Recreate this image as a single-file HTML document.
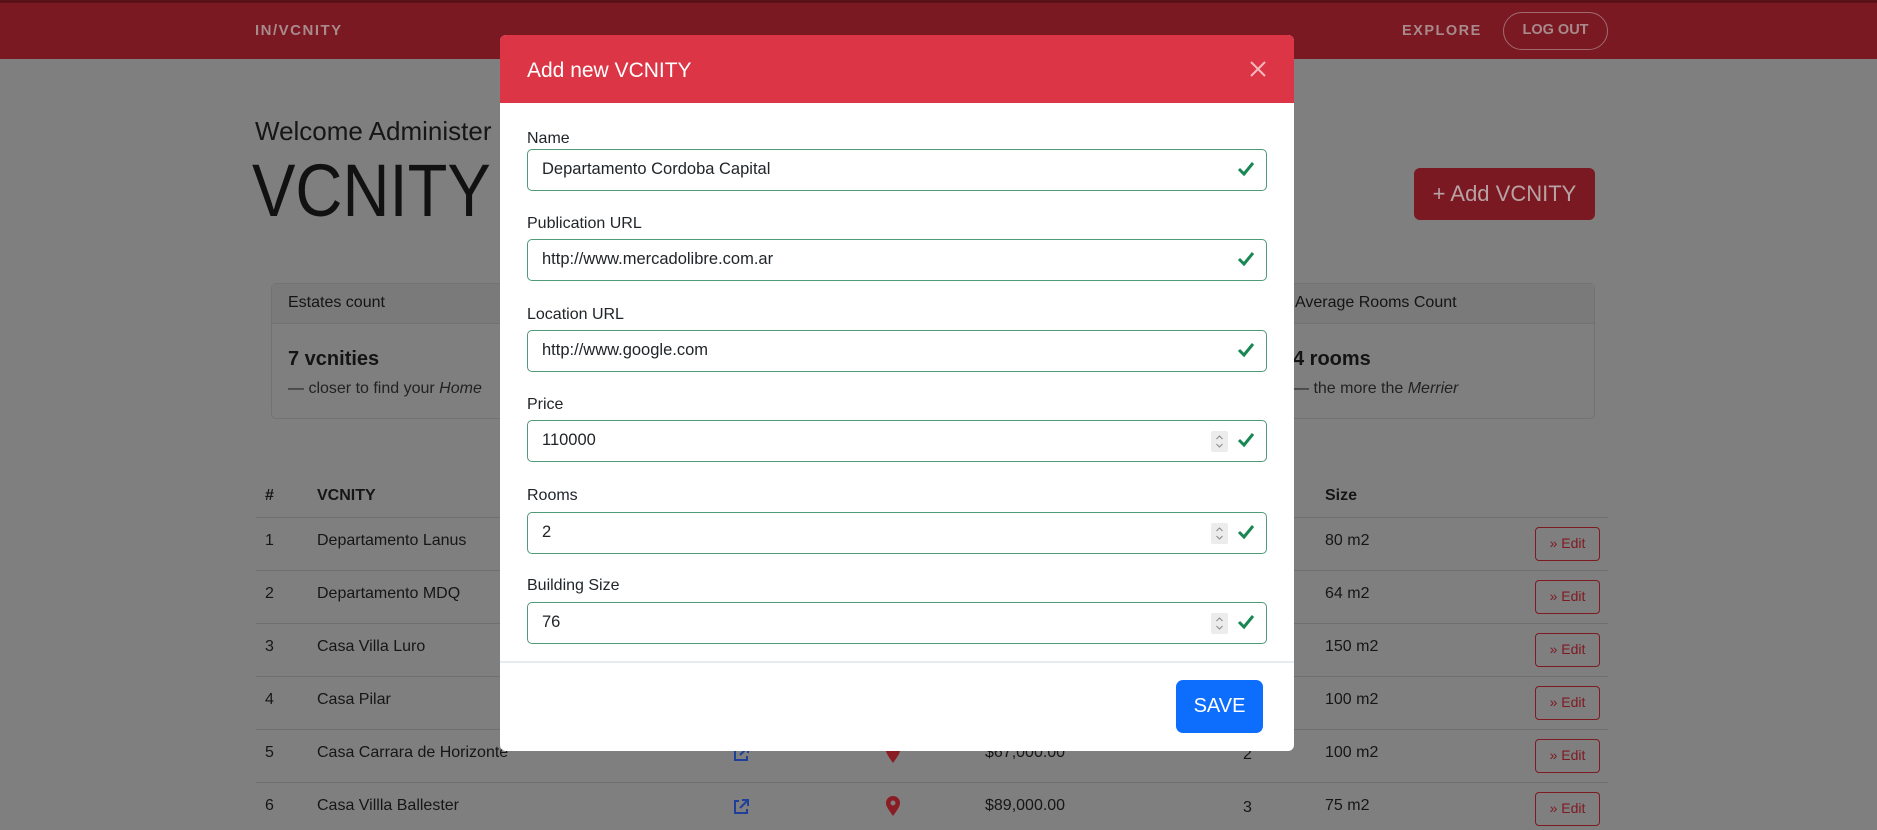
<!DOCTYPE html>
<html><head><meta charset="utf-8"><style>
*{box-sizing:border-box;margin:0;padding:0}
body{width:1877px;height:830px;overflow:hidden;background:#7f7f7f;font-family:"Liberation Sans",Arial,sans-serif;color:#141414;position:relative}
.a{position:absolute;white-space:nowrap}
.nav{left:0;top:0;width:1877px;height:59px;background:#7a1921;border-top:3px solid #5a1218}
.navt{color:#a88a8d;font-weight:bold;font-size:15px;letter-spacing:1.5px}
.card{border:1px solid #727272;border-radius:5px;background:#7f7f7f}
.ch{background:#7a7a7a;border-bottom:1px solid #727272}
.line{height:1px;background:#6f6f6f;left:256px;width:1352px}
.td{font-size:16px;color:#161616}
.edit{width:65px;height:34px;border:1.5px solid #7d1a22;border-radius:4px;color:#7d1a22;font-size:14px;text-align:center;line-height:31px}
.modal{left:500px;top:35px;width:794px;height:716px;background:#fff;border-radius:6px;overflow:hidden}
.mh{left:0;top:0;width:794px;height:68px;background:#dc3545}
.lbl{font-size:16px;color:#212529;left:27px}
.inp{left:27px;width:740px;height:42px;border:1.5px solid #4f9a78;border-radius:5px;font-size:16.5px;color:#212529;padding-left:14px;line-height:39px}
.chk{position:absolute;right:10px;top:9px}
.spin{position:absolute;right:38px;top:10px;width:17px;height:21px;background:#ececec;border-radius:2px}
</style></head><body>
<div class="a nav"></div>
<div class="a navt" style="left:255px;top:22px">IN/VCNITY</div>
<div class="a navt" style="left:1402px;top:23px;font-size:14.5px">EXPLORE</div>
<div class="a" style="left:1503px;top:12px;width:105px;height:38px;border:1.5px solid #a06a70;border-radius:19px;color:#a88a8d;font-weight:bold;font-size:14.5px;text-align:center;line-height:35px">LOG OUT</div>

<div class="a" style="left:255px;top:116px;font-size:26px;color:#161616">Welcome Administer</div>
<div class="a" style="left:252px;top:148px;font-size:74px;color:#111;transform:scaleX(0.88);transform-origin:0 0">VCNITY</div>
<div class="a" style="left:1414px;top:168px;width:181px;height:52px;background:#7a1921;border-radius:6px;color:#b8a2a4;font-size:22px;text-align:center;line-height:52px">+ Add VCNITY</div>

<div class="a card" style="left:271px;top:283px;width:320px;height:136px"><div class="ch" style="height:40px"></div></div>
<div class="a" style="left:288px;top:294px;font-size:16px">Estates count</div>
<div class="a" style="left:288px;top:348px;font-size:20px;font-weight:bold">7 vcnities</div>
<div class="a" style="left:288px;top:380px;font-size:16px;color:#222">— closer to find your <i>Home</i></div>
<div class="a card" style="left:1270px;top:283px;width:325px;height:136px"><div class="ch" style="height:40px"></div></div>
<div class="a" style="left:1295px;top:294px;font-size:16px">Average Rooms Count</div>
<div class="a" style="left:1293px;top:348px;font-size:20px;font-weight:bold">4 rooms</div>
<div class="a" style="left:1293px;top:380px;font-size:16px;color:#222">— the more the <i>Merrier</i></div>

<div class="a td" style="left:265px;top:487px;font-weight:bold">#</div>
<div class="a td" style="left:317px;top:487px;font-weight:bold">VCNITY</div>
<div class="a td" style="left:1325px;top:487px;font-weight:bold">Size</div>
<div class="a line" style="top:517px"></div>
<div class="a line" style="top:570px"></div>
<div class="a line" style="top:623px"></div>
<div class="a line" style="top:676px"></div>
<div class="a line" style="top:729px"></div>
<div class="a line" style="top:782px"></div>

<div class="a td" style="left:265px;top:532px">1</div><div class="a td" style="left:317px;top:532px">Departamento Lanus</div><div class="a td" style="left:1325px;top:532px">80 m2</div><div class="a edit" style="left:1535px;top:527px">» Edit</div>
<div class="a td" style="left:265px;top:585px">2</div><div class="a td" style="left:317px;top:585px">Departamento MDQ</div><div class="a td" style="left:1325px;top:585px">64 m2</div><div class="a edit" style="left:1535px;top:580px">» Edit</div>
<div class="a td" style="left:265px;top:638px">3</div><div class="a td" style="left:317px;top:638px">Casa Villa Luro</div><div class="a td" style="left:1325px;top:638px">150 m2</div><div class="a edit" style="left:1535px;top:633px">» Edit</div>
<div class="a td" style="left:265px;top:691px">4</div><div class="a td" style="left:317px;top:691px">Casa Pilar</div><div class="a td" style="left:1325px;top:691px">100 m2</div><div class="a edit" style="left:1535px;top:686px">» Edit</div>
<div class="a td" style="left:265px;top:744px">5</div><div class="a td" style="left:317px;top:744px">Casa Carrara de Horizonte</div><div class="a td" style="left:985px;top:744px">$67,000.00</div><div class="a td" style="left:1243px;top:746px">2</div><div class="a td" style="left:1325px;top:744px">100 m2</div><div class="a edit" style="left:1535px;top:739px">» Edit</div>
<div class="a td" style="left:265px;top:797px">6</div><div class="a td" style="left:317px;top:797px">Casa Villla Ballester</div><div class="a td" style="left:985px;top:797px">$89,000.00</div><div class="a td" style="left:1243px;top:799px">3</div><div class="a td" style="left:1325px;top:797px">75 m2</div><div class="a edit" style="left:1535px;top:792px">» Edit</div>
<svg class="a" style="left:731px;top:744px" width="20" height="20" viewBox="0 0 20 20"><path d="M8 4H4v12h12v-4M11 3h6v6M17 3l-8 8" fill="none" stroke="#1f3f9a" stroke-width="2"/></svg>
<svg class="a" style="left:731px;top:797px" width="20" height="20" viewBox="0 0 20 20"><path d="M8 4H4v12h12v-4M11 3h6v6M17 3l-8 8" fill="none" stroke="#1f3f9a" stroke-width="2"/></svg>
<svg class="a" style="left:885px;top:795px" width="16" height="22" viewBox="0 0 16 22"><path d="M8 21C3 14 1 11 1 8a7 7 0 0114 0c0 3-2 6-7 13z" fill="#8a1c24"/><circle cx="8" cy="8" r="2.5" fill="#7f7f7f"/></svg>
<svg class="a" style="left:885px;top:742px" width="16" height="22" viewBox="0 0 16 22"><path d="M8 21C3 14 1 11 1 8a7 7 0 0114 0c0 3-2 6-7 13z" fill="#8a1c24"/></svg>

<div class="a modal">
 <div class="a mh"></div>
 <div class="a" style="left:27px;top:24px;font-size:21px;color:#fff">Add new VCNITY</div>
 <svg class="a" style="left:749px;top:25px" width="18" height="18" viewBox="0 0 18 18"><path d="M2 2L16 16M16 2L2 16" stroke="#f4b9bf" stroke-width="2"/></svg>

 <div class="a lbl" style="top:95px">Name</div>
 <div class="a inp" style="top:114px">Departamento Cordoba Capital<svg class="chk" width="20" height="20" viewBox="0 0 20 20"><path d="M3 10l5 5L17 4" fill="none" stroke="#198754" stroke-width="3"/></svg></div>
 <div class="a lbl" style="top:180px">Publication URL</div>
 <div class="a inp" style="top:204px">http://www.mercadolibre.com.ar<svg class="chk" width="20" height="20" viewBox="0 0 20 20"><path d="M3 10l5 5L17 4" fill="none" stroke="#198754" stroke-width="3"/></svg></div>
 <div class="a lbl" style="top:271px">Location URL</div>
 <div class="a inp" style="top:295px">http://www.google.com<svg class="chk" width="20" height="20" viewBox="0 0 20 20"><path d="M3 10l5 5L17 4" fill="none" stroke="#198754" stroke-width="3"/></svg></div>
 <div class="a lbl" style="top:361px">Price</div>
 <div class="a inp" style="top:385px">110000<svg class="spin" viewBox="0 0 17 21"><path d="M5.5 8l3-3 3 3M5.5 13l3 3 3-3" fill="none" stroke="#888" stroke-width="1"/></svg><svg class="chk" width="20" height="20" viewBox="0 0 20 20"><path d="M3 10l5 5L17 4" fill="none" stroke="#198754" stroke-width="3"/></svg></div>
 <div class="a lbl" style="top:452px">Rooms</div>
 <div class="a inp" style="top:477px">2<svg class="spin" viewBox="0 0 17 21"><path d="M5.5 8l3-3 3 3M5.5 13l3 3 3-3" fill="none" stroke="#888" stroke-width="1"/></svg><svg class="chk" width="20" height="20" viewBox="0 0 20 20"><path d="M3 10l5 5L17 4" fill="none" stroke="#198754" stroke-width="3"/></svg></div>
 <div class="a lbl" style="top:542px">Building Size</div>
 <div class="a inp" style="top:567px">76<svg class="spin" viewBox="0 0 17 21"><path d="M5.5 8l3-3 3 3M5.5 13l3 3 3-3" fill="none" stroke="#888" stroke-width="1"/></svg><svg class="chk" width="20" height="20" viewBox="0 0 20 20"><path d="M3 10l5 5L17 4" fill="none" stroke="#198754" stroke-width="3"/></svg></div>
 <div class="a" style="left:0;top:626px;width:794px;height:2px;background:#e9ecef"></div>
 <div class="a" style="left:676px;top:645px;width:87px;height:53px;background:#0d6efd;border-radius:7px;color:#fff;font-size:20px;text-align:center;line-height:53px">SAVE</div>
</div>
</body></html>
